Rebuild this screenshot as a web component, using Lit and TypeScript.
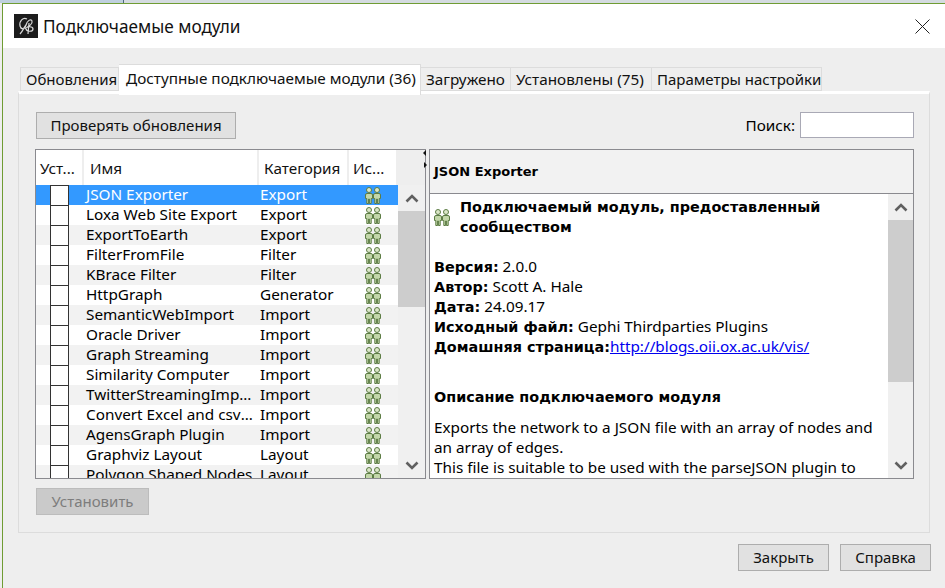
import { LitElement, html, css, svg } from "lit";
import { customElement } from "lit/decorators.js";

const ROWS = [
  ["JSON Exporter", "Export"],
  ["Loxa Web Site Export", "Export"],
  ["ExportToEarth", "Export"],
  ["FilterFromFile", "Filter"],
  ["KBrace Filter", "Filter"],
  ["HttpGraph", "Generator"],
  ["SemanticWebImport", "Import"],
  ["Oracle Driver", "Import"],
  ["Graph Streaming", "Import"],
  ["Similarity Computer", "Import"],
  ["TwitterStreamingImporter", "Import"],
  ["Convert Excel and csv files", "Import"],
  ["AgensGraph Plugin", "Import"],
  ["Graphviz Layout", "Layout"],
  ["Polygon Shaped Nodes", "Layout"],
];

const TABS = [
  { label: "Обновления", width: 99, tight: true },
  { label: "Доступные подключаемые модули (36)", width: 302 },
  { label: "Загружено", width: 90 },
  { label: "Установлены (75)", width: 141 },
  { label: "Параметры настройки", width: 170, tight: true },
];

// two little people, used for "community" plugins
const people = html`<svg class="people" width="16" height="17" viewBox="0 0 16 17">
  ${[0, 8].map(
    (x) => svg`<g transform="translate(${x} 0)">
      <circle cx="4" cy="3" r="2.5" fill="#dbe7c8" stroke="#5c7c44" stroke-width="1" />
      <path d="M0.5 8 Q0.5 6.5 2 6.5 H6 Q7.5 6.5 7.5 8 V11.5 H6.2 V16.5 H4.4 V12 H3.6 V16.5 H1.8 V11.5 H0.5 Z"
        fill="#c3d7aa" stroke="#5c7c44" stroke-width="1" stroke-linejoin="round" />
    </g>`
  )}
</svg>`;

const chevronUp = html`<svg width="14" height="9" viewBox="0 0 14 9"><path d="M1.5 7.5 L7 2 L12.5 7.5" fill="none" stroke="#606060" stroke-width="2.6" /></svg>`;
const chevronDown = html`<svg width="14" height="9" viewBox="0 0 14 9"><path d="M1.5 1.5 L7 7 L12.5 1.5" fill="none" stroke="#606060" stroke-width="2.6" /></svg>`;

@customElement("app-root")
export class AppRoot extends LitElement {
  static styles = css`
    :host {
      display: block;
      width: 945px;
      height: 588px;
      overflow: hidden;
      background: #eeeeee;
      font-family: "Noto Sans", "Open Sans", sans-serif;
      font-size: 15.3px;
      color: #000;
    }
    .strip {
      height: 3px;
      background: linear-gradient(90deg, #bfd0de 0 123px, #50697f 123px 124px, #d4dbe0 124px);
    }
    .window {
      height: 585px;
      margin-left: 2px;
      border-left: 1px solid #6f9c33;
      border-top: 1px solid #6f9c33;
      box-sizing: border-box;
      display: flex;
      flex-direction: column;
    }
    .titlebar {
      height: 44px;
      flex: none;
      background: #fff;
      display: flex;
      align-items: center;
      padding: 0 15px 0 11px;
      gap: 5px;
    }
    .title {
      flex: 1;
      font-size: 17.2px;
      color: #111;
    }
    .close {
      display: block;
    }
    .content {
      flex: 1;
      display: flex;
      flex-direction: column;
      padding: 17px 0 0 15px;
    }
    .tabs {
      display: flex;
      height: 26px;
      align-items: flex-end;
      position: relative;
      z-index: 1;
      padding-left: 2px;
    }
    .tab {
      box-sizing: border-box;
      height: 24px;
      line-height: 23px;
      padding-left: 5px;
      background: #eeeeee;
      border: 1px solid #dcdcdc;
      border-left: 0;
      white-space: nowrap;
      color: #111;
    }
    .tab:first-child {
      border-left: 1px solid #dcdcdc;
    }
    .tab.tight {
      font-size: 15px;
    }
    .tab.active {
      height: 31px;
      line-height: 26px;
      padding-left: 7px;
      background: #fff;
      border-bottom: 0;
      margin-bottom: -4px;
    }
    .panel {
      width: 912px;
      height: 442px;
      flex: none;
      box-sizing: border-box;
      border: 1px solid #dcdcdc;
      border-top: 3px solid #fff;
      padding: 18px 15px 0 16px;
      display: flex;
      flex-direction: column;
    }
    .toolbar {
      display: flex;
      align-items: center;
      height: 26px;
      margin-bottom: 11px;
    }
    .spacer {
      flex: 1;
    }
    .btn {
      box-sizing: border-box;
      height: 27px;
      line-height: 25px;
      font-size: 15px;
      text-align: center;
      background: #e1e1e1;
      border: 1px solid #adadad;
      color: #111;
    }
    .check-btn {
      width: 200px;
      margin-left: 1px;
    }
    .search-label {
      margin-right: 5px;
    }
    .search {
      box-sizing: border-box;
      width: 114px;
      height: 26px;
      background: #fff;
      border: 1px solid #a9a9b5;
    }
    .split {
      display: flex;
      height: 330px;
    }
    .table-frame {
      box-sizing: border-box;
      width: 391px;
      border: 1px solid #8a8a8f;
      display: flex;
      overflow: hidden;
      background: #eee;
    }
    .table {
      width: 362px;
      flex: none;
      overflow: hidden;
    }
    .thead {
      display: flex;
      height: 35px;
    }
    .th {
      flex: none;
      box-sizing: border-box;
      background: #fff;
      border-right: 2px solid #eeeeee;
      line-height: 36px;
      padding-left: 4px;
      white-space: nowrap;
      overflow: hidden;
      color: #111;
    }
    .th.c1 {
      padding-left: 6px;
    }
    .th.c2 {
      padding-left: 5px;
    }
    .th.c3 {
      border-right: 0;
    }
    .row {
      display: flex;
      height: 20px;
      line-height: 19px;
      background: #fff;
    }
    .row.alt {
      background: #f2f2f2;
    }
    .row.sel {
      background: #3399ff;
      color: #fff;
    }
    .c0 {
      width: 48px;
    }
    .c1 {
      width: 175px;
    }
    .c2 {
      width: 90px;
    }
    .c3 {
      width: 47px;
    }
    .cell {
      flex: none;
      box-sizing: border-box;
      white-space: nowrap;
      overflow: hidden;
      text-overflow: ellipsis;
      padding-left: 2px;
    }
    .cell.c1 {
      padding-right: 3px;
    }
    .cell.c2 {
      padding-left: 1px;
    }
    .cell.c0 {
      padding: 0 0 0 14px;
    }
    .box {
      box-sizing: border-box;
      width: 19px;
      height: 21px;
      background: #fff;
      border: 1px solid #333;
    }
    .cell.c3 {
      padding: 2px 0 0 16px;
      display: flex;
    }
    .people {
      display: block;
      flex: none;
    }
    .scroll {
      flex: 1;
      display: flex;
      flex-direction: column;
      background: #f0f0f0;
      justify-content: space-between;
    }
    .scroll.list {
      margin: 35px 0 0 0;
    }
    .arrow {
      height: 26px;
      flex: none;
      display: flex;
      align-items: center;
      justify-content: center;
    }
    .thumb {
      flex: none;
      background: #cdcdcd;
    }
    .track {
      flex: 1;
    }
    .splitter {
      width: 3px;
      flex: none;
      position: relative;
    }
    .splitter i {
      position: absolute;
      left: -3px;
      width: 0;
      height: 0;
      border: 3px solid transparent;
    }
    .splitter .l {
      top: 1px;
      border-right: 3px solid #111;
      border-left: 0;
    }
    .splitter .r {
      top: 13px;
      left: -2px;
      border-left: 3px solid #111;
      border-right: 0;
    }
    .detail {
      box-sizing: border-box;
      width: 485px;
      border: 1px solid #8a8a8f;
      display: flex;
      flex-direction: column;
      overflow: hidden;
    }
    .detail-head {
      height: 43px;
      flex: none;
      line-height: 43px;
      padding-left: 4px;
      background: #f2f2f2;
      border-bottom: 1px solid #8a8a8f;
      font-family: "DejaVu Sans", sans-serif;
      font-size: 13px;
      font-weight: 700;
    }
    .detail-body {
      flex: 1;
      display: flex;
      min-height: 0;
      background: #fff;
    }
    .doc {
      width: 458px;
      flex: none;
      box-sizing: border-box;
      padding: 3px 0 0 4px;
      overflow: hidden;
      line-height: 20px;
    }
    .plugin-head {
      display: flex;
      align-items: center;
      gap: 10px;
      margin-bottom: 19px;
    }
    .plugin-head .people {
      margin-top: 1px;
    }
    .meta {
      margin-bottom: 20px;
    }
    .meta div {
      height: 20px;
    }
    b,
    .bold {
      font-family: "DejaVu Sans", sans-serif;
      font-size: 14.4px;
      font-weight: 700;
    }
    a {
      color: #0000ee;
      text-decoration: underline;
    }
    .desc-title {
      margin: 31px 0 10px;
    }
    .footer-row {
      height: 27px;
      margin-top: 9px;
      display: flex;
    }
    .install {
      width: 113px;
      margin-left: 1px;
      background: #cacaca;
      border-color: #bcbcbc;
      color: #7d7d7d;
    }
    .actions {
      display: flex;
      justify-content: flex-end;
      gap: 11px;
      width: 913px;
      margin-top: 11px;
    }
    .actions .btn {
      width: 91px;
    }
  `;

  render() {
    return html`
      <div class="strip"></div>
      <div class="window">
        <div class="titlebar">
          <svg width="24" height="24" viewBox="0 0 24 24">
            <rect width="24" height="24" fill="#1c1c1c" />
            <path d="M13 5 C9 3 5 7 6 12 C7 16 11 15 12 11 C10 13 9 17 6 20 M12 11 C13 7 17 4 18 7 C19 10 14 13 13 13 M15 9 L14 20 M11 15 C13 12 19 12 19 15 C19 18 13 18 12 15"
              fill="none" stroke="#d8d8d8" stroke-width="1.2" />
          </svg>
          <div class="title">Подключаемые модули</div>
          <svg class="close" width="15" height="15" viewBox="0 0 15 15">
            <path d="M0.5 0.5 L14.5 14.5 M14.5 0.5 L0.5 14.5" stroke="#222" stroke-width="1" />
          </svg>
        </div>
        <div class="content">
          <div class="tabs">
            ${TABS.map(
              (t, i) => html`<div class="tab ${i === 1 ? "active" : ""} ${t.tight ? "tight" : ""}" style="width: ${t.width}px">${t.label}</div>`
            )}
          </div>
          <div class="panel">
            <div class="toolbar">
              <div class="btn check-btn">Проверять обновления</div>
              <div class="spacer"></div>
              <div class="search-label">Поиск:</div>
              <div class="search"></div>
            </div>
            <div class="split">
              <div class="table-frame">
                <div class="table">
                  <div class="thead">
                    <div class="th c0">Уст...</div>
                    <div class="th c1">Имя</div>
                    <div class="th c2">Категория</div>
                    <div class="th c3">Ис...</div>
                  </div>
                  ${ROWS.map(
                    (r, i) => html`<div class="row ${i === 0 ? "sel" : i % 2 === 0 ? "alt" : ""}">
                      <div class="cell c0"><div class="box"></div></div>
                      <div class="cell c1">${r[0]}</div>
                      <div class="cell c2">${r[1]}</div>
                      <div class="cell c3">${people}</div>
                    </div>`
                  )}
                </div>
                <div class="scroll list">
                  <div class="arrow">${chevronUp}</div>
                  <div class="thumb" style="height: 96px"></div>
                  <div class="track"></div>
                  <div class="arrow">${chevronDown}</div>
                </div>
              </div>
              <div class="splitter"><i class="l"></i><i class="r"></i></div>
              <div class="detail">
                <div class="detail-head">JSON Exporter</div>
                <div class="detail-body">
                  <div class="doc">
                    <div class="plugin-head">
                      ${people}
                      <div class="bold">Подключаемый модуль, предоставленный<br />сообществом</div>
                    </div>
                    <div class="meta">
                      <div><b>Версия:</b> 2.0.0</div>
                      <div><b>Автор:</b> Scott A. Hale</div>
                      <div><b>Дата:</b> 24.09.17</div>
                      <div><b>Исходный файл:</b> Gephi Thirdparties Plugins</div>
                      <div><b>Домашняя страница:</b><a href="#">http://blogs.oii.ox.ac.uk/vis/</a></div>
                    </div>
                    <div class="desc-title bold">Описание подключаемого модуля</div>
                    <div>Exports the network to a JSON file with an array of nodes and<br />an array of edges.<br />This file is suitable to be used with the parseJSON plugin to</div>
                  </div>
                  <div class="scroll">
                    <div class="arrow">${chevronUp}</div>
                    <div class="thumb" style="height: 162px"></div>
                    <div class="track"></div>
                    <div class="arrow">${chevronDown}</div>
                  </div>
                </div>
              </div>
            </div>
            <div class="footer-row">
              <div class="btn install">Установить</div>
            </div>
          </div>
          <div class="actions">
            <div class="btn">Закрыть</div>
            <div class="btn">Справка</div>
          </div>
        </div>
      </div>
    `;
  }
}
